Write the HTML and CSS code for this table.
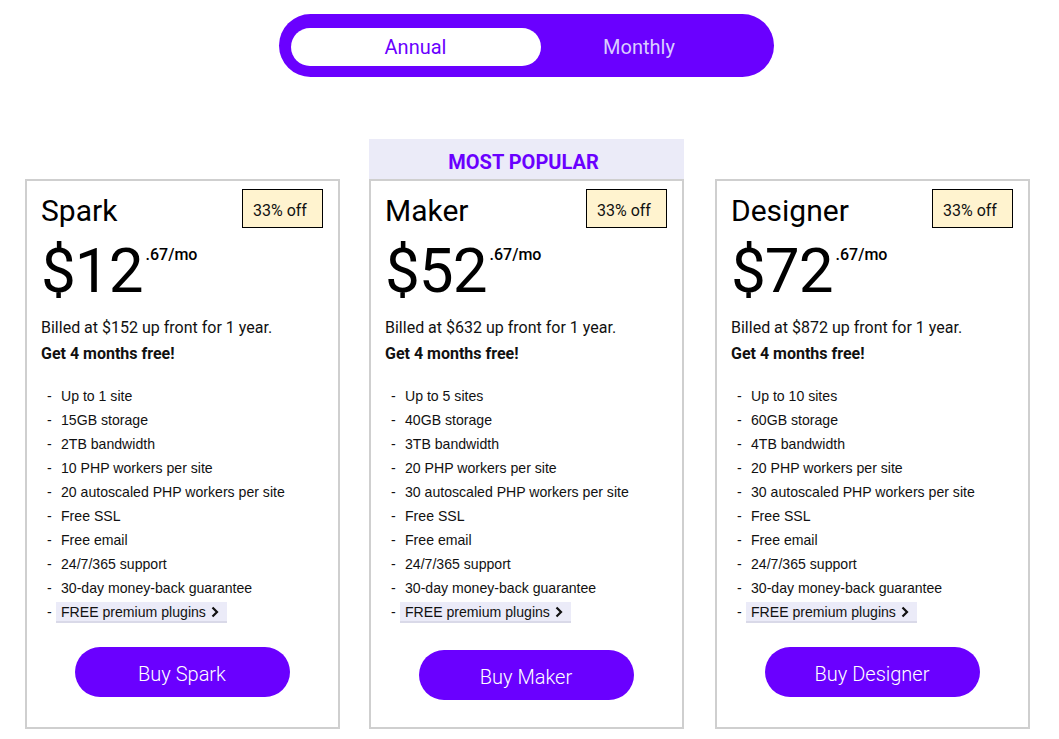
FILE: index.html
```html
<!DOCTYPE html>
<html lang="en">
<head>
<meta charset="utf-8">
<title>Pricing</title>
<link rel="stylesheet" href="styles.css">
</head>
<body>
<main class="page">
  <div class="toggle">
    <button class="toggle-opt is-active" type="button">Annual</button>
    <button class="toggle-opt" type="button">Monthly</button>
  </div>

  <section class="plans">
    <div class="plan-col">
      <article class="card">
        <header class="card-head">
          <h2 class="plan-name">Spark</h2>
          <span class="badge">33% off</span>
        </header>
        <div class="price"><span class="price-main">$12</span><span class="price-sup">.67/mo</span></div>
        <p class="billed">Billed at $152 up front for 1 year.</p>
        <p class="free">Get 4 months free!</p>
        <ul class="features">
          <li><span>Up to 1 site</span></li>
          <li><span>15GB storage</span></li>
          <li><span>2TB bandwidth</span></li>
          <li><span>10 PHP workers per site</span></li>
          <li><span>20 autoscaled PHP workers per site</span></li>
          <li><span>Free SSL</span></li>
          <li><span>Free email</span></li>
          <li><span>24/7/365 support</span></li>
          <li><span>30-day money-back guarantee</span></li>
          <li><span class="chip">FREE premium plugins<svg class="chev" viewBox="0 0 8 12" width="8" height="12"><path d="M1.5 1.5 L6 6 L1.5 10.5" fill="none" stroke="#111" stroke-width="2.2"/></svg></span></li>
        </ul>
        <button class="buy" type="button">Buy Spark</button>
      </article>
    </div>

    <div class="plan-col plan-col-mid">
      <div class="popular">MOST POPULAR</div>
      <article class="card">
        <header class="card-head">
          <h2 class="plan-name">Maker</h2>
          <span class="badge">33% off</span>
        </header>
        <div class="price"><span class="price-main">$52</span><span class="price-sup">.67/mo</span></div>
        <p class="billed">Billed at $632 up front for 1 year.</p>
        <p class="free">Get 4 months free!</p>
        <ul class="features">
          <li><span>Up to 5 sites</span></li>
          <li><span>40GB storage</span></li>
          <li><span>3TB bandwidth</span></li>
          <li><span>20 PHP workers per site</span></li>
          <li><span>30 autoscaled PHP workers per site</span></li>
          <li><span>Free SSL</span></li>
          <li><span>Free email</span></li>
          <li><span>24/7/365 support</span></li>
          <li><span>30-day money-back guarantee</span></li>
          <li><span class="chip">FREE premium plugins<svg class="chev" viewBox="0 0 8 12" width="8" height="12"><path d="M1.5 1.5 L6 6 L1.5 10.5" fill="none" stroke="#111" stroke-width="2.2"/></svg></span></li>
        </ul>
        <button class="buy buy-low" type="button">Buy Maker</button>
      </article>
    </div>

    <div class="plan-col">
      <article class="card">
        <header class="card-head">
          <h2 class="plan-name">Designer</h2>
          <span class="badge">33% off</span>
        </header>
        <div class="price"><span class="price-main">$72</span><span class="price-sup">.67/mo</span></div>
        <p class="billed">Billed at $872 up front for 1 year.</p>
        <p class="free">Get 4 months free!</p>
        <ul class="features">
          <li><span>Up to 10 sites</span></li>
          <li><span>60GB storage</span></li>
          <li><span>4TB bandwidth</span></li>
          <li><span>20 PHP workers per site</span></li>
          <li><span>30 autoscaled PHP workers per site</span></li>
          <li><span>Free SSL</span></li>
          <li><span>Free email</span></li>
          <li><span>24/7/365 support</span></li>
          <li><span>30-day money-back guarantee</span></li>
          <li><span class="chip">FREE premium plugins<svg class="chev" viewBox="0 0 8 12" width="8" height="12"><path d="M1.5 1.5 L6 6 L1.5 10.5" fill="none" stroke="#111" stroke-width="2.2"/></svg></span></li>
        </ul>
        <button class="buy" type="button">Buy Designer</button>
      </article>
    </div>
  </section>
</main>
</body>
</html>
```

FILE: styles.css
```css
* { box-sizing: border-box; }

html, body {
  margin: 0;
  padding: 0;
  background: #ffffff;
}

body {
  font-family: Roboto, "Liberation Sans", Arial, sans-serif;
  color: #000;
}

.page {
  width: 1059px;
  padding-top: 14px;
  display: flex;
  flex-direction: column;
  align-items: center;
}

/* Toggle */
.toggle {
  width: 495px;
  height: 63px;
  margin-left: -7px;
  background: #6a00ff;
  border-radius: 32px;
  padding: 14px 12px 11px 12px;
  display: grid;
  grid-template-columns: 250px 1fr;
}

.toggle-opt {
  border: 0;
  background: transparent;
  font-family: Roboto, sans-serif;
  font-size: 20px;
  color: #d9cdff;
  padding: 0 24px 0 0;
  cursor: pointer;
  line-height: 38px;
  height: 38px;
}

.toggle-opt.is-active {
  background: #fff;
  color: #6a00ff;
  border-radius: 19px;
  padding: 0;
}

/* Plans */
.plans {
  margin-top: 62px;
  margin-left: -4px;
  display: grid;
  grid-template-columns: repeat(3, 315px);
  column-gap: 30px;
  align-items: end;
}

.plan-col {
  display: flex;
  flex-direction: column;
}

.plan-col-mid {
  margin-left: -1px;
  margin-right: 1px;
}

.popular {
  height: 40px;
  background: #ebebf8;
  color: #6a00ff;
  font-weight: 700;
  font-size: 20px;
  text-align: center;
  line-height: 46px;
  padding-right: 6px;
}

.card {
  height: 550px;
  border: 2px solid #cfcfcf;
  padding: 8px 15px 0 14px;
  display: flex;
  flex-direction: column;
}

.card-head {
  display: flex;
  justify-content: space-between;
  align-items: flex-start;
}

.plan-name {
  margin: 4px 0 0 0;
  font-size: 30px;
  line-height: 36px;
  font-weight: 400;
}

.badge {
  display: block;
  width: 81px;
  height: 39px;
  border: 1px solid #000;
  background: #fff3cf;
  font-size: 16px;
  line-height: 41px;
  padding-left: 10px;
  color: #111;
}

.price {
  margin-top: 11px;
  display: flex;
  align-items: flex-start;
}

.price-main {
  font-size: 62px;
  line-height: 62px;
  letter-spacing: -1px;
}

.price-sup {
  font-size: 16px;
  line-height: 16px;
  font-weight: 500;
  margin-top: 7px;
  margin-left: 3px;
}

.billed {
  margin: 13px 0 0 0;
  font-size: 16px;
  line-height: 26px;
  color: #111;
}

.free {
  margin: 0;
  font-size: 16px;
  line-height: 26px;
  font-weight: 700;
  color: #111;
}

.features {
  list-style: none;
  margin: 17px 0 0 0;
  padding: 0 0 0 6px;
  font-family: "Liberation Sans", Arial, sans-serif;
  font-size: 14.1px;
  line-height: 24px;
  color: #111;
}

.features li {
  display: flex;
  align-items: center;
  height: 24px;
}

.features li::before {
  content: "-";
  width: 9px;
}

.features li > span {
  padding-left: 5px;
}

.features li > .chip {
  display: inline-flex;
  align-items: center;
  height: 21px;
  padding: 0 8px 0 5px;
  background: #ebebf8;
  border-bottom: 2px solid #d9d9e8;
  margin-top: 1px;
}

.chev {
  margin-left: 5px;
}

.buy {
  align-self: center;
  margin-top: 23px;
  width: 215px;
  height: 50px;
  border: 0;
  border-radius: 25px;
  background: #6a00ff;
  color: #fff;
  font-family: Roboto, sans-serif;
  font-size: 20px;
  font-weight: 300;
  padding-top: 5px;
  cursor: pointer;
}

.buy-low {
  margin-top: 26px;
}
```
